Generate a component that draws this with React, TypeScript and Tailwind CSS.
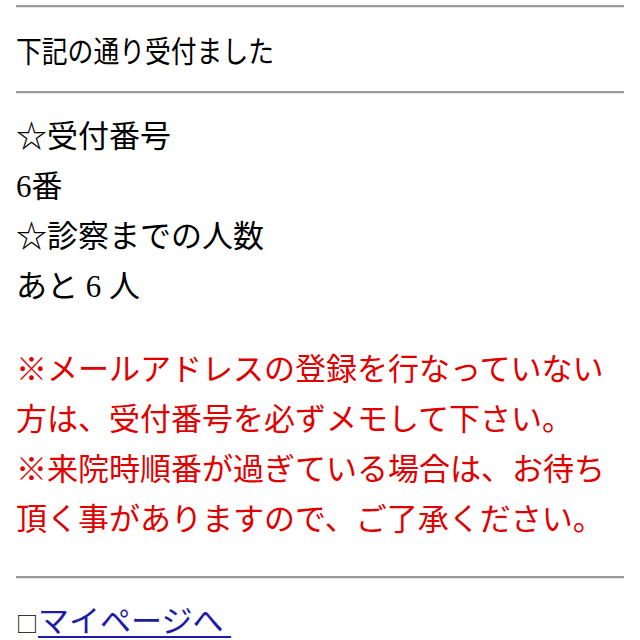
import React from 'react';

const font = { fontFamily: '"Liberation Serif", "Noto Sans CJK JP", serif' };

const Rule = () => (
  <div className="border-t-2 border-b border-t-[#9a9a9a] border-b-[#e6e6e6]" />
);

export default function App() {
  return (
    <div className="bg-white w-[640px] h-[640px] overflow-hidden px-4 pt-[5px] text-black" style={font}>
      <Rule />
      <div className="h-[83px] flex items-center">
        <span className="inline-block origin-left scale-x-[0.86] text-[30px] font-['Noto_Sans_CJK_JP'] whitespace-nowrap">
          下記の通り受付ました
        </span>
      </div>
      <Rule />

      <div className="pt-[18px] text-[31px] leading-[50px]">
        <div>☆受付番号</div>
        <div>6番</div>
        <div>☆診察までの人数</div>
        <div>あと 6 人</div>
      </div>

      <div className="pt-[33px] text-[31px] leading-[50px] text-[#e00000]">
        <div>※メールアドレスの登録を行なっていない</div>
        <div>方は、受付番号を必ずメモして下さい。</div>
        <div>※来院時順番が過ぎている場合は、お待ち</div>
        <div>頂く事がありますので、ご了承ください。</div>
      </div>

      <div className="pt-[31px]">
        <Rule />
      </div>

      <div className="pt-[18px] leading-[50px] flex items-baseline">
        <span className="text-[22px] font-['Noto_Sans_CJK_JP'] leading-none">□</span>
        <a href="#" className="text-[31px] text-[#1c1ca8] underline decoration-2 underline-offset-4 whitespace-pre">マイページへ </a>
      </div>
    </div>
  );
}
